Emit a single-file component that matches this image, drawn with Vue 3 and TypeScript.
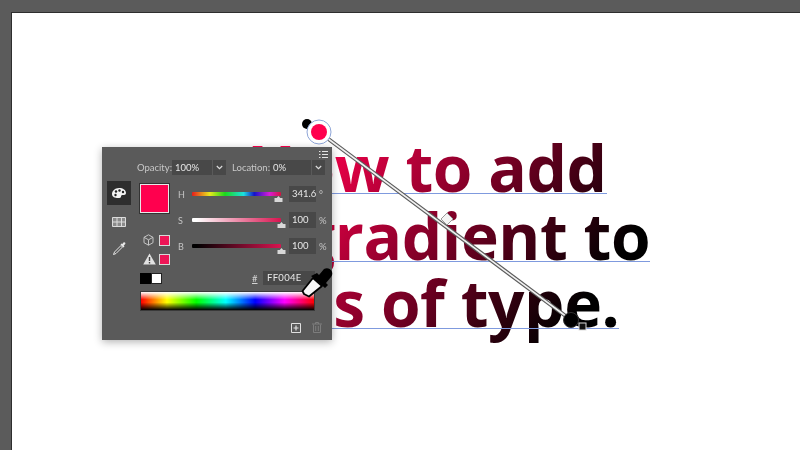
<template>
  <div class="workspace">
    <div class="artboard">
      <div class="headline">
        <div v-for="line in lines" :key="line.text" class="type-line" :class="line.cls">{{ line.text }}</div>
      </div>

      <svg class="gradient-tool" width="788" height="437" viewBox="12 13 788 437">
        <line x1="319" y1="132" x2="571" y2="320" stroke="#5c5c5c" stroke-width="4" />
        <line x1="319" y1="132" x2="571" y2="320" stroke="#f2f2f2" stroke-width="1.6" />
        <circle cx="307" cy="124" r="5" fill="#000" />
        <circle cx="319" cy="132" r="12" fill="#fff" stroke="#8fa6d8" stroke-width="1" />
        <circle cx="319" cy="132" r="8" fill="#ff004e" />
        <path d="M447 213l6 6-6 6-6-6z" fill="#f4f4f4" stroke="#999" stroke-width="1" />
        <circle cx="571" cy="320" r="7.5" fill="#000" stroke="#333" stroke-width="1" />
        <rect x="579" y="323" width="7" height="7" fill="#111" stroke="#ddd" stroke-width="1" />
      </svg>

      <section class="panel">
        <div class="panel-menu">
          <svg width="9" height="7" viewBox="0 0 9 7">
            <path d="M0 .5h1.5M3 .5h6M0 3.5h1.5M3 3.5h6M0 6.5h1.5M3 6.5h6" stroke="#e4e4e4" stroke-width="1.2" />
          </svg>
        </div>

        <div class="fields">
          <span class="field-label">Opacity:</span>
          <div class="combo combo-wide">
            <span class="combo-value">100%</span>
            <span class="combo-arrow"><svg width="7" height="5" viewBox="0 0 7 5"><path d="M.8 1l2.7 2.6L6.2 1" fill="none" stroke="#ddd" stroke-width="1.2" /></svg></span>
          </div>
          <span class="field-label location">Location:</span>
          <div class="combo combo-loc">
            <span class="combo-value">0%</span>
            <span class="combo-arrow"><svg width="7" height="5" viewBox="0 0 7 5"><path d="M.8 1l2.7 2.6L6.2 1" fill="none" stroke="#ddd" stroke-width="1.2" /></svg></span>
          </div>
        </div>

        <div class="body">
          <div class="tools">
            <div class="tool tool-active">
              <svg width="16" height="12" viewBox="0 0 16 12">
                <path d="M1 7c0-3 3-6 7-6s7 2 7 5c0 2-2 2-3 2s-2 0-2 1.500S9 11 7 11C4 11 1 10 1 7z" fill="#f4f4f4" />
                <circle cx="5" cy="4.500" r="1.200" fill="#222" />
                <circle cx="8.500" cy="3.500" r="1.200" fill="#222" />
                <circle cx="12" cy="5" r="1.200" fill="#222" />
                <circle cx="4.500" cy="8" r="1.200" fill="#222" />
              </svg>
            </div>
            <div class="tool">
              <svg width="14" height="10" viewBox="0 0 14 10">
                <path d="M.5.5h13v9H.5zM.5 5h13M5 .5v9M9.500.5v9" fill="#8a8a8a" stroke="#dcdcdc" stroke-width="1" />
              </svg>
            </div>
            <div class="tool">
              <svg width="15" height="15" viewBox="0 0 15 15">
                <path d="M9 4.500L2.500 11 1.500 13.500 4 12.500 10.500 6z" fill="#555" stroke="#e8e8e8" stroke-width="1" />
                <path d="M8.500 3.500l3 3 1-1-.8-.8 1.500-1.700c.8-1-.7-2.400-1.700-1.500L10.300 3l-.8-.5z" fill="#e8e8e8" />
              </svg>
            </div>
          </div>

          <div class="main">
            <div class="color-area">
              <div class="swatch-col">
                <div class="big-swatch"></div>
                <div class="alert-row gamut">
                  <svg width="11" height="12" viewBox="0 0 11 12">
                    <path d="M5.500.8l4.500 2.500v5.400l-4.500 2.500L1 8.700V3.300zM1 3.300l4.500 2.500L10 3.300M5.500 5.800v5.400" fill="none" stroke="#c4c4c4" stroke-width="1" />
                  </svg>
                  <span class="mini-swatch"></span>
                </div>
                <div class="alert-row">
                  <svg width="13" height="12" viewBox="0 0 13 12">
                    <path d="M6.500.5L12.800 11.500H.2z" fill="#e2e2e2" />
                    <path d="M6.500 4v4M6.500 9v1.500" stroke="#444" stroke-width="1.400" />
                  </svg>
                  <span class="mini-swatch"></span>
                </div>
              </div>

              <div class="sliders">
                <div v-for="s in sliders" :key="s.label" class="slider-row">
                  <span class="slider-label">{{ s.label }}</span>
                  <div class="track-wrap">
                    <div class="track" :class="s.track"></div>
                    <svg class="thumb" :style="{ left: s.thumb + 'px' }" width="9" height="6" viewBox="0 0 9 6">
                      <path d="M4.500 0l1.700 2h2.300v4h-8V2h2.300z" fill="#d8d8d8" />
                    </svg>
                  </div>
                  <span class="num-box">{{ s.value }}</span>
                  <span class="unit">{{ s.unit }}</span>
                </div>
              </div>
            </div>

            <div class="hex-row">
              <div class="fg-bg"><span class="bg-black"></span><span class="bg-white"></span></div>
              <span class="hash">#</span>
              <span class="hex-box">FF004E</span>
            </div>

            <div class="spectrum"></div>

            <div class="panel-foot">
              <svg width="10" height="10" viewBox="0 0 10 10">
                <path d="M.5.5h9v9h-9z" fill="none" stroke="#e0e0e0" stroke-width="1" />
                <path d="M5 2.500v5M2.500 5h5" stroke="#e0e0e0" stroke-width="1.200" />
              </svg>
              <svg width="10" height="11" viewBox="0 0 10 11">
                <path d="M0 2h10M3.500 2V.5h3V2M1.500 2.500v8h7v-8M3.700 4v5M6.300 4v5" fill="none" stroke="#7d7d7d" stroke-width="1" />
              </svg>
            </div>
          </div>
        </div>
      </section>

      <svg class="dropper" width="36" height="36" viewBox="0 0 36 36">
        <path d="M4 29l-1.500-3L13 13l9 8-13 10.500z" fill="#f6f6f6" stroke="#000" stroke-width="1.800" stroke-linejoin="round" />
        <path d="M11 11l14 12 3-3-2-2 5-6c4-5-2-11-7-8l-5 6-2-2z" fill="#000" />
      </svg>
    </div>
  </div>
</template>

<script setup lang="ts">
interface Slider {
  label: string;
  value: string;
  unit: string;
  track: string;
  thumb: number;
}

const lines = [
  { text: 'How to add', cls: 'line-one' },
  { text: 'a gradient to', cls: 'line-two' },
  { text: 'lots of type.', cls: 'line-three' },
];

const sliders: Slider[] = [
  { label: 'H', value: '341.6', unit: '°', track: 'track-hue', thumb: 86 },
  { label: 'S', value: '100', unit: '%', track: 'track-sat', thumb: 89 },
  { label: 'B', value: '100', unit: '%', track: 'track-bri', thumb: 89 },
];
</script>

<style>
html,
body {
  margin: 0;
  background: #5a5a5a;
}
</style>

<style scoped>
.workspace {
  width: 800px;
  height: 450px;
  box-sizing: border-box;
  padding: 12px 0 0 11px;
  background: #5b5b5b;
  overflow: hidden;
  display: flex;
}

.artboard {
  position: relative;
  flex: 1;
  background: #fff;
  border-top: 1px solid #2e2e2e;
  border-left: 1px solid #2e2e2e;
}

.headline {
  box-sizing: border-box;
  width: 460px;
  height: 215px;
  margin: 117px 0 0 188px;
  padding-top: 11px;
  display: flex;
  flex-direction: column;
  align-items: flex-start;
  gap: 14.5px;
  font-family: 'Open Sans', sans-serif;
  font-weight: 700;
  font-size: 64px;
  letter-spacing: -0.4px;
  white-space: nowrap;
  color: transparent;
  background: linear-gradient(126.7deg, #ff004e 19.4%, #000 82.6%);
  -webkit-background-clip: text;
  background-clip: text;
}

.type-line {
  height: 52px;
  line-height: 54px;
  border-bottom: 1px solid #7f9ade;
}

.line-one {
  margin-left: 47px;
}

.line-two {
  margin-left: 44.5px;
}

.line-three {
  margin-left: 47.5px;
}

.gradient-tool {
  position: absolute;
  left: 0;
  top: 0;
  pointer-events: none;
}

.panel {
  position: absolute;
  left: 90px;
  top: 134px;
  width: 230px;
  height: 193px;
  background: #5a5a5a;
  box-shadow: 0 2px 8px rgba(0, 0, 0, 0.3);
  color: #cfcfcf;
  font-family: Lato, 'Open Sans', sans-serif;
  font-size: 9.5px;
  display: flex;
  flex-direction: column;
  filter: blur(0.3px);
}

.panel-menu {
  height: 13px;
  padding: 4px 4px 0 0;
  box-sizing: border-box;
  display: flex;
  justify-content: flex-end;
}

.fields {
  height: 15px;
  padding-left: 35px;
  display: flex;
  align-items: center;
}

.field-label {
  width: 35px;
  color: #c8c8c8;
}

.location {
  width: 38px;
  margin-left: 6px;
}

.combo {
  height: 15px;
  display: flex;
  background: #484848;
  color: #e6e6e6;
}

.combo-wide {
  width: 54px;
}

.combo-loc {
  width: 55px;
}

.combo-value {
  flex: 1;
  padding-left: 3px;
  line-height: 15px;
}

.combo-arrow {
  width: 13px;
  border-left: 1px solid #5a5a5a;
  display: flex;
  align-items: center;
  justify-content: center;
}

.body {
  display: flex;
  margin-top: 6px;
}

.tools {
  width: 24px;
  margin-left: 5px;
  display: flex;
  flex-direction: column;
}

.tool {
  height: 24px;
  margin-bottom: 2px;
  display: flex;
  align-items: center;
  justify-content: center;
}

.tool-active {
  background: #2e2e2e;
  margin-bottom: 5px;
}

.main {
  margin-left: 9px;
  width: 190px;
}

.color-area {
  display: flex;
  height: 84px;
}

.swatch-col {
  width: 36px;
  padding-top: 3px;
}

.big-swatch {
  box-sizing: border-box;
  width: 29px;
  height: 29px;
  background: #ff004e;
  border: 1px solid #e8e8e8;
  outline: 1px solid #333;
  outline-offset: -0.5px;
}

.alert-row {
  display: flex;
  align-items: center;
  justify-content: flex-end;
  gap: 3px;
  width: 30px;
  height: 12px;
  margin-top: 7px;
}

.gamut {
  margin-top: 21px;
  gap: 5px;
}

.mini-swatch {
  box-sizing: border-box;
  width: 11px;
  height: 11px;
  background: #ee1556;
  border: 1px solid #d8d8d8;
}

.sliders {
  margin-top: 5px;
  display: flex;
  flex-direction: column;
  gap: 10px;
}

.slider-row {
  height: 16px;
  display: flex;
  align-items: center;
}

.slider-label {
  box-sizing: border-box;
  width: 16px;
  padding-left: 2px;
  color: #c4c4c4;
  font-size: 9px;
}

.track-wrap {
  position: relative;
  width: 89px;
  height: 16px;
  display: flex;
  align-items: center;
  margin-right: 8px;
}

.track {
  width: 100%;
  height: 3.5px;
  border-radius: 1px;
}

.thumb {
  position: absolute;
  top: 10px;
  margin-left: -4.5px;
}

.track-hue {
  background: linear-gradient(to right, #e81c1c, #e8e81c 20%, #1cd81c 37%, #1ce0e0 58%, #1414c8 70%, #d81cd8 87%, #d4143c);
}

.track-sat {
  background: linear-gradient(to right, #fff 5%, #d81450);
}

.track-bri {
  background: linear-gradient(to right, #000 5%, #d81450);
}

.num-box {
  box-sizing: border-box;
  width: 27px;
  height: 16px;
  padding-left: 3px;
  background: #484848;
  color: #e8e8e8;
  font-size: 9.5px;
  line-height: 16px;
}

.unit {
  margin-left: 3px;
  color: #c4c4c4;
}

.hex-row {
  margin-top: 6px;
  height: 14px;
  display: flex;
  align-items: center;
}

.fg-bg {
  display: flex;
  width: 112px;
}

.bg-black {
  width: 11px;
  height: 11px;
  background: #000;
}

.bg-white {
  box-sizing: border-box;
  width: 11px;
  height: 11px;
  background: #fff;
  border: 1px solid #222;
}

.hash {
  width: 11px;
  font-size: 9.5px;
  text-decoration: underline;
  color: #d4d4d4;
}

.hex-box {
  width: 52px;
  height: 14px;
  box-sizing: border-box;
  padding-left: 4px;
  background: #484848;
  color: #e8e8e8;
  line-height: 14px;
  letter-spacing: 0.3px;
}

.spectrum {
  width: 173px;
  height: 18px;
  margin: 7px 0 0 1px;
  background:
    linear-gradient(to bottom, #fff 0, rgba(255, 255, 255, 0) 42%, rgba(0, 0, 0, 0) 58%, #000 100%),
    linear-gradient(to right, #f00, #ff0 15%, #0f0 32%, #0ff 49%, #00f 66%, #f0f 83%, #f00);
  outline: 1px solid #3a3a3a;
}

.panel-foot {
  display: flex;
  justify-content: flex-end;
  align-items: center;
  gap: 11px;
  margin-top: 12px;
  width: 182px;
}

.dropper {
  position: absolute;
  left: 288px;
  top: 252px;
}
</style>
